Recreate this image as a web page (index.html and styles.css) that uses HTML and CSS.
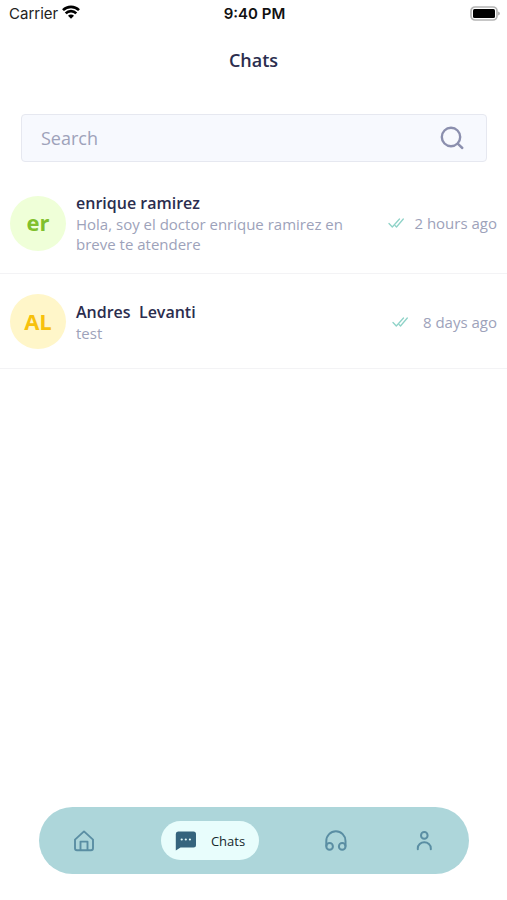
FILE: index.html
```html
<!DOCTYPE html>
<html lang="en">
<head>
<meta charset="utf-8">
<meta name="viewport" content="width=device-width, initial-scale=1">
<title>Chats</title>
<link rel="stylesheet" href="styles.css">
</head>
<body>
<div class="status">
  <div class="status-left">
    <span>Carrier</span>
    <svg class="wifi" viewBox="0 0 18 14" width="18" height="14" fill="none" stroke="#000" stroke-width="2.6"><path d="M1 5.2a11.3 11.3 0 0 1 16 0"/><path d="M3.7 8.4a7.4 7.4 0 0 1 10.6 0"/><path d="M6 10.8a4 4 0 0 1 6 0L9 13.8z" fill="#000" stroke="none"/></svg>
  </div>
  <span class="time">9:40 PM</span>
  <svg class="battery" viewBox="0 0 31 15" width="31" height="15"><rect x="2" y="1" width="26" height="13" rx="4" fill="#fff" stroke="#b4b4b4" stroke-width="1.7"/><rect x="4" y="3" width="22" height="9" rx="1.5" fill="#000"/><path d="M29 5.5v4q2-.6 2-2t-2-2z" fill="#b4b4b4"/></svg>
</div>
<header class="header"><h1>Chats</h1></header>
<main class="main">
  <form class="search" role="search">
    <input type="search" placeholder="Search" aria-label="Search">
    <button type="button" aria-label="Search">
      <svg viewBox="0 0 24 24" width="24" height="24" fill="none" stroke="#8b8fae" stroke-width="2.4" stroke-linecap="round"><circle cx="11" cy="11" r="9.2"/><path d="M17.7 17.7L22.3 22"/></svg>
    </button>
  </form>
  <ul class="chats">
    <li>
      <a class="chat" href="#">
        <span class="avatar green">er</span>
        <span class="body"><strong>enrique ramirez</strong><span class="preview">Hola, soy el doctor enrique ramirez en breve te atendere</span></span>
        <span class="meta">
          <svg viewBox="0 0 16 10" width="16" height="10" fill="none" stroke="#8fd3c8" stroke-width="1.3" stroke-linecap="round" stroke-linejoin="round"><path d="M1 5.5L4.3 9 11.5 1M7.3 7.8L8.5 9 15.3 1"/></svg>
          <time>2 hours ago</time>
        </span>
      </a>
    </li>
    <li>
      <a class="chat" href="#">
        <span class="avatar yellow">AL</span>
        <span class="body"><strong>Andres  Levanti</strong><span class="preview">test</span></span>
        <span class="meta">
          <svg viewBox="0 0 16 10" width="16" height="10" fill="none" stroke="#8fd3c8" stroke-width="1.3" stroke-linecap="round" stroke-linejoin="round"><path d="M1 5.5L4.3 9 11.5 1M7.3 7.8L8.5 9 15.3 1"/></svg>
          <time>8 days ago</time>
        </span>
      </a>
    </li>
  </ul>
</main>
<nav class="tabs" aria-label="Main">
  <a href="#" aria-label="Home"><svg viewBox="0 0 22 22" width="22" height="22" fill="none" stroke="#5a8ea3" stroke-width="1.9" stroke-linecap="round" stroke-linejoin="round"><path d="M2 9.6L11 1.4l9 8.2v8.6a2 2 0 0 1-2 2H4a2 2 0 0 1-2-2z"/><path d="M7.5 20v-8.4h7V20"/></svg></a>
  <a class="active" href="#" aria-current="page"><svg viewBox="0 0 22 22" width="22" height="22"><path d="M3.5 1.5h15a2.5 2.5 0 0 1 2.5 2.5v11a2.5 2.5 0 0 1-2.5 2.5H5.5L.8 20.6V4a2.5 2.5 0 0 1 2.7-2.5z" fill="#35647d"/><g fill="#e8fdfc"><circle cx="6.7" cy="9.5" r="1.1"/><circle cx="10.8" cy="9.5" r="1.1"/><circle cx="14.9" cy="9.5" r="1.1"/></g></svg><span>Chats</span></a>
  <a href="#" aria-label="Support"><svg viewBox="0 0 22 22" width="22" height="22" fill="none" stroke="#5a8ea3" stroke-width="2"><path d="M1.3 16.5v-5.6a9.6 9.6 0 0 1 19.2 0v5.6"/><circle cx="4.6" cy="16.4" r="3.3"/><circle cx="17.2" cy="16.4" r="3.3"/></svg></a>
  <a href="#" aria-label="Profile"><svg viewBox="0 0 22 22" width="22" height="22" fill="none" stroke="#5a8ea3" stroke-width="2" stroke-linecap="round"><circle cx="11.3" cy="5.4" r="3.3"/><path d="M4.8 19.2v-1a6.5 6 0 0 1 13 0v1"/></svg></a>
</nav>
</body>
</html>
```
FILE: styles.css
```css
* {
  box-sizing: border-box;
}

body {
  margin: 0;
  min-height: 100vh;
  display: flex;
  flex-direction: column;
  background: #fff;
  color: #2b2d4e;
  font-family: "Open Sans", sans-serif;
}

a {
  color: inherit;
  text-decoration: none;
}

svg {
  display: block;
  flex: none;
}

.status {
  display: grid;
  grid-template-columns: 1fr auto 1fr;
  align-items: center;
  height: 27px;
  padding: 0 7px 0 9px;
  color: #222;
  font: 15px/20px Inter, sans-serif;
}

.status-left {
  display: flex;
  align-items: center;
  gap: 4px;
}

.wifi {
  margin-bottom: 3px;
}

.time {
  color: #111;
  font-weight: 600;
}

.battery {
  justify-self: end;
}

.header {
  padding: 21px 0 42px;
  text-align: center;
}

h1 {
  margin: 0;
  font-size: 18px;
  font-weight: 600;
  line-height: 24px;
}

.main {
  flex: 1;
}

.search {
  display: flex;
  align-items: center;
  height: 48px;
  margin: 0 20px 10px 21px;
  padding: 0 22px 0 19px;
  border: 1px solid #e6e8f0;
  border-radius: 4px;
  background: #f7f9fe;
}

.search input {
  flex: 1;
  min-width: 0;
  padding: 0;
  border: 0;
  outline: 0;
  background: none;
  color: #252847;
  font: 18px/24px "Open Sans", sans-serif;
}

.search input::placeholder {
  color: #9ea2ba;
}

.search button {
  padding: 0;
  border: 0;
  background: none;
}

.chats {
  margin: 0;
  padding: 0;
  list-style: none;
}

.chat {
  display: flex;
  align-items: center;
  padding: 20px 10px 19px;
  border-bottom: 1px solid #f3f3f5;
}

.avatar {
  display: grid;
  place-items: center;
  flex: none;
  width: 56px;
  height: 55px;
  padding-bottom: 2px;
  border-radius: 50%;
  font-size: 22px;
  font-weight: 700;
}

.green {
  background: #efffd8;
  color: #80c02c;
}

.yellow {
  background: #fff6c9;
  color: #f7c10c;
}

.body {
  flex: 1;
  min-width: 0;
  max-width: 290px;
  margin-left: 10px;
  font-size: 15px;
  line-height: 20px;
}

.body strong {
  display: block;
  font-size: 16px;
  font-weight: 600;
  line-height: 22px;
  white-space: pre;
}

.preview {
  display: block;
}

.preview,
.meta {
  color: #9da2ba;
}

.meta {
  display: flex;
  align-items: center;
  gap: 10px;
  margin-left: auto;
  font-size: 15px;
  line-height: 20px;
  white-space: nowrap;
}

.meta time {
  min-width: 79px;
  text-align: right;
}

.tabs {
  display: flex;
  align-items: center;
  justify-content: space-between;
  height: 67px;
  margin: 0 38px 26px 39px;
  padding: 0 34px;
  border-radius: 34px;
  background: #add6da;
}

.active {
  display: flex;
  align-items: center;
  gap: 14px;
  height: 39px;
  padding: 0 14px;
  border-radius: 20px;
  background: #e8fdfc;
  color: #16272c;
  font-size: 13px;
}
```
